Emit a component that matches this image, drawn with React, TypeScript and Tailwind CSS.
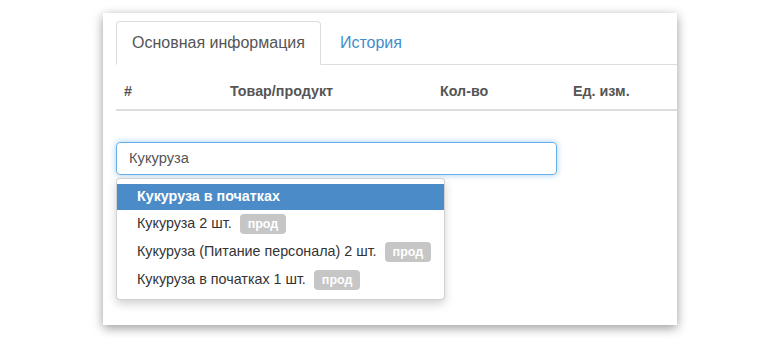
const items = [
  { name: 'Кукуруза в початках', label: null as string | null, active: true },
  { name: 'Кукуруза 2 шт.', label: 'прод', active: false },
  { name: 'Кукуруза (Питание персонала) 2 шт.', label: 'прод', active: false },
  { name: 'Кукуруза в початках 1 шт.', label: 'прод', active: false },
];

export default function App() {
  return (
    <div
      className="w-[780px] h-[339px] bg-white pt-[13px] pl-[103px]"
      style={{ fontFamily: '"Liberation Sans", Arial, sans-serif' }}
    >
      <div className="w-[574px] h-[312px] bg-white overflow-hidden pt-[8px] pl-[13px] shadow-[0_3px_10px_rgba(0,0,0,0.4)]">
        {/* Tabs */}
        <div className="flex border-b border-[#ddd]">
          <div className="h-[44px] -mb-px flex items-center px-[15px] border border-[#ddd] border-b-white rounded-t-[4px] bg-white text-[16px] text-[#555] whitespace-nowrap">
            Основная информация
          </div>
          <div className="h-[43px] ml-[2px] flex items-center px-[17px] text-[16px] text-[#428bca]">
            История
          </div>
        </div>

        {/* Table header */}
        <div className="h-[46px] flex items-end pb-[8px] border-b-2 border-[#ddd] text-[14.3px] leading-[20px] font-bold text-[#555] whitespace-nowrap">
          <div className="w-[114px] shrink-0 pl-[8px]">#</div>
          <div className="w-[210px] shrink-0">Товар/продукт</div>
          <div className="w-[133px] shrink-0">Кол-во</div>
          <div className="flex-1">Ед. изм.</div>
        </div>

        {/* Search input */}
        <div className="mt-[31px] w-[441px] h-[33px] flex items-center px-[12px] rounded-[4px] border border-[#66afe9] shadow-[0_0_6px_rgba(102,175,233,0.6)] text-[14.7px] text-[#555]">
          Кукуруза
        </div>

        {/* Dropdown */}
        <div className="mt-[3px] w-[329px] py-[5px] bg-white border border-[rgba(0,0,0,0.18)] rounded-[4px] shadow-[0_4px_10px_rgba(0,0,0,0.18)]">
          {items.map((it, i) => (
            <div
              key={i}
              className={
                it.active
                  ? 'h-[26px] flex items-center px-[20px] bg-[#4a8bc8] text-white font-bold text-[14.3px] whitespace-nowrap'
                  : 'h-[28px] flex items-center px-[20px] text-[#333] text-[14.3px] whitespace-nowrap'
              }
            >
              <span>{it.name}</span>
              {it.label && (
                <span className="ml-[8px] h-[20px] px-[8px] flex items-center rounded-[4px] bg-[#c6c6c6] text-white text-[12.5px] font-bold">
                  {it.label}
                </span>
              )}
            </div>
          ))}
        </div>
      </div>
    </div>
  );
}
